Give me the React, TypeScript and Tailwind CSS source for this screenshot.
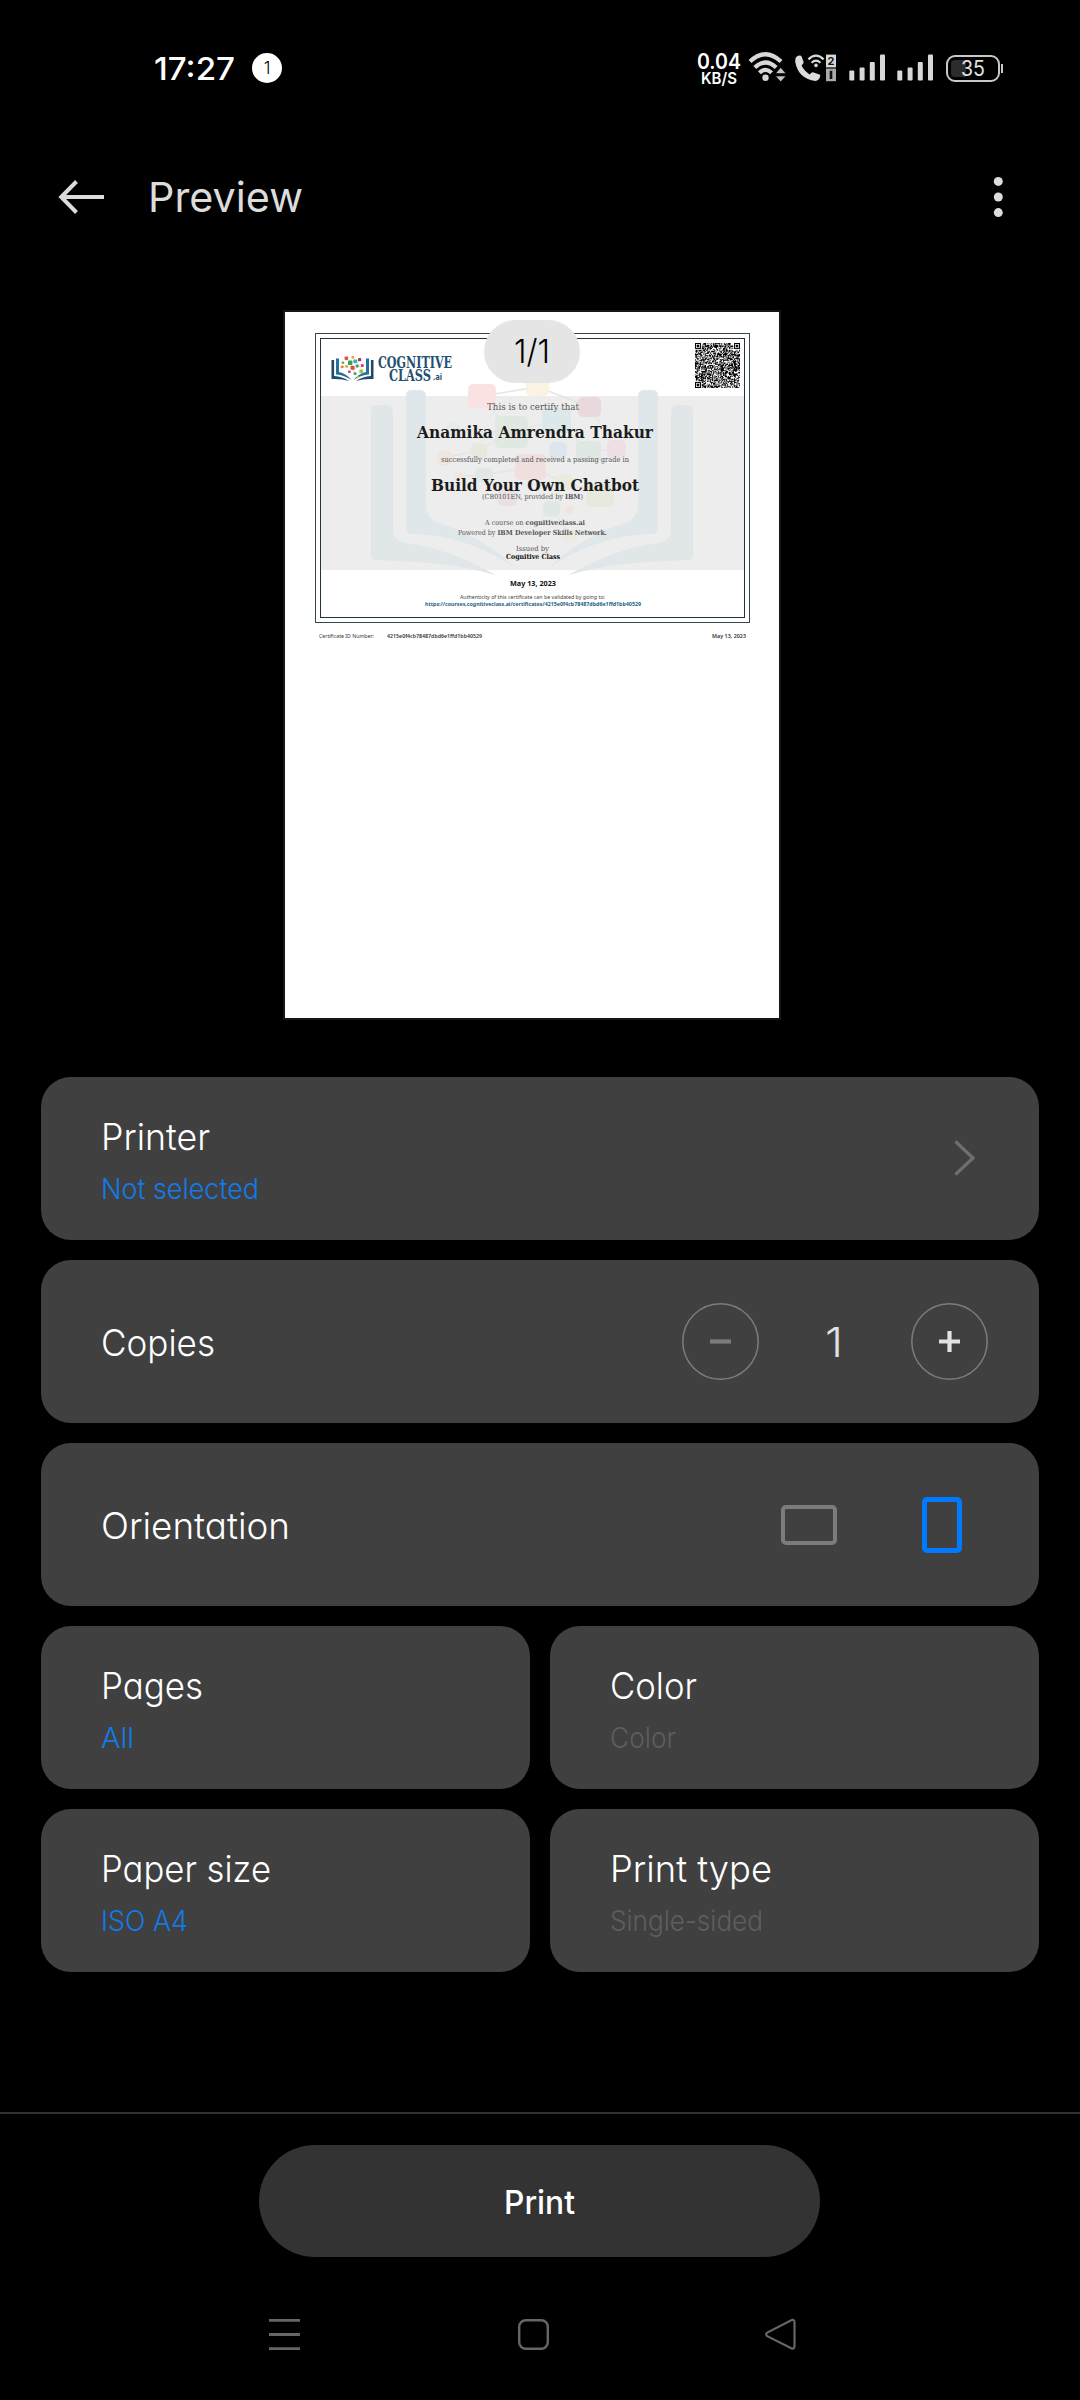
import { useLayoutEffect, useRef, useState, type ReactNode } from "react";

/** A single line of text, stretched or squeezed to the width of its box. */
function Fit({ className = "", children }: { className?: string; children: ReactNode }) {
  const box = useRef<HTMLDivElement>(null);
  const line = useRef<HTMLSpanElement>(null);
  const [scale, setScale] = useState(1);
  useLayoutEffect(() => {
    if (box.current && line.current && line.current.offsetWidth > 0) {
      const natural = line.current.getBoundingClientRect().width / scale;
      setScale(box.current.getBoundingClientRect().width / natural);
    }
  }, []);
  return (
    <div ref={box} className={"shrink-0 whitespace-nowrap " + className}>
      <span ref={line} className="inline-block origin-left" style={{ transform: `scaleX(${scale})` }}>
        {children}
      </span>
    </div>
  );
}

function Signal() {
  return (
    <svg width="37" height="27" viewBox="0 0 37 27" fill="#d8d8d8">
      <rect x="0.3" y="16.5" width="5" height="10" rx="1" />
      <rect x="10.6" y="13.5" width="5" height="13" rx="1" />
      <rect x="20.8" y="8" width="5" height="18.5" rx="1" />
      <rect x="31" y="0.5" width="5" height="26" rx="1" />
    </svg>
  );
}

function StatusBar() {
  return (
    <div className="flex h-[136px] items-start pl-[154px] pt-[50px] text-white">
      <Fit className="mt-[1px] w-[81px] text-[31px] font-medium leading-[36px]">17:27</Fit>
      <div className="ml-[17px] mt-[3px] flex h-[30px] w-[30px] items-center justify-center rounded-full bg-white text-[17px] font-light leading-none text-black">
        1
      </div>
      <div className="ml-[415px] w-[44px]">
        <Fit className="mt-[1px] w-[44px] text-[21px] font-semibold leading-[21px]">0.04</Fit>
        <Fit className="ml-[4px] mt-[-2px] w-[36px] text-[16px] font-semibold leading-[16px]">KB/S</Fit>
      </div>
      <svg className="ml-[7px] mt-[1px]" width="40" height="34" viewBox="0 0 40 34">
        <g fill="none" stroke="#d8d8d8" strokeWidth="4.2">
          <path d="M2 10.5 Q17.5 -4 33 10.5" />
          <path d="M6.8 16.5 Q17.5 6.5 28.2 16.5" />
          <path d="M11.4 21.8 Q17.5 16 23.6 21.8" />
        </g>
        <circle cx="17.5" cy="26.8" r="3.2" fill="#d8d8d8" />
        <path d="M27.5 22.5 L32.7 16.5 L38 22.5Z M27.5 25 L32.7 30.8 L38 25Z" fill="#c4c4c4" stroke="#000" strokeWidth="0.6" />
      </svg>
      <svg className="ml-[7px] mt-[4px]" width="42" height="32" viewBox="0 0 42 32">
        <path
          d="M0.4 5 Q1 2 5 1.6 Q6 1.6 6.6 2.6 L8.6 8 Q8.8 9 8 9.8 L6.6 11.6 Q9 17 14.6 20.4 L16.8 18.6 Q17.6 18 18.6 18.4 L24.4 20.6 Q25.6 21 25.2 22.2 Q24 26.6 20.4 27 Q3.6 25 0.2 8 Z"
          fill="#dcdcdc"
        />
        <g fill="none" stroke="#d8d8d8" strokeWidth="2.2">
          <path d="M13.4 5.4 Q21 -2 28.6 5.4" />
          <path d="M16.6 8.8 Q21 4.6 25.4 8.8" />
        </g>
        <circle cx="21" cy="11.4" r="1.8" fill="#d8d8d8" />
        <rect x="31" y="0.6" width="10" height="12.8" fill="#d8d8d8" />
        <rect x="31" y="14.6" width="10" height="12.6" fill="#a9a9a9" />
        <text x="36" y="11" textAnchor="middle" fontSize="11" fontWeight="700" fill="#111">2</text>
        <rect x="34.7" y="16.8" width="2.6" height="8.2" fill="#111" />
      </svg>
      <div className="ml-[12px] mt-[4px]">
        <Signal />
      </div>
      <div className="ml-[11px] mt-[4px]">
        <Signal />
      </div>
      <div className="ml-[12px] mt-[5px] flex items-center">
        <div className="relative flex h-[27px] w-[54px] items-center justify-center overflow-hidden rounded-[9px] border-2 border-[#c8c8c8]">
          <div className="absolute left-[3px] top-[3px] h-[17px] w-[15px] rounded-l-[4px] bg-[#2c2c2c]" />
          <Fit className="relative w-[24px] text-[21px] leading-[24px] text-[#e0e0e0]">35</Fit>
        </div>
        <div className="ml-[1px] h-[9px] w-[2px] bg-[#c8c8c8]" />
      </div>
    </div>
  );
}

function Header() {
  return (
    <div className="flex h-[121px] items-center pl-[58px] pr-[72px]">
      <svg width="48" height="40" viewBox="0 0 48 40" fill="none" stroke="#dcdcdc" strokeWidth="4">
        <path d="M3.5 20 H46 M18.5 4.5 L3.2 20 L18.5 35.5" />
      </svg>
      <Fit className="ml-[42px] mt-[1px] w-[155px] text-[41px] leading-[50px] text-[#dcdcdc]">Preview</Fit>
      <svg className="ml-auto" width="20" height="44" viewBox="0 0 20 44" fill="#dcdcdc">
        <circle cx="10.3" cy="6.4" r="4.5" />
        <circle cx="10.3" cy="22" r="4.5" />
        <circle cx="10.3" cy="37.6" r="4.5" />
      </svg>
    </div>
  );
}

const QR_SIZE = 53;

function inFinder(x: number, y: number, fx: number, fy: number) {
  return x >= fx - 1 && x <= fx + 7 && y >= fy - 1 && y <= fy + 7;
}

function QrCode() {
  const corners = [
    [0, 0],
    [QR_SIZE - 7, 0],
    [0, QR_SIZE - 7],
  ];
  let seed = 9241;
  let d = "";
  for (let y = 0; y < QR_SIZE; y++) {
    for (let x = 0; x < QR_SIZE; x++) {
      seed = (seed * 1103515245 + 12345) % 2147483648;
      if (corners.some(([fx, fy]) => inFinder(x, y, fx, fy))) continue;
      if ((seed >> 12) % 100 < 54) d += `M${x} ${y}h1v1h-1z`;
    }
  }
  return (
    <svg width="45" height="45" viewBox="0 0 53 53" fill="#000">
      <path d={d} />
      {corners.map(([x, y]) => (
        <g key={`${x}-${y}`}>
          <rect x={x + 0.6} y={y + 0.6} width="5.8" height="5.8" fill="none" stroke="#000" strokeWidth="1.2" />
          <rect x={x + 2} y={y + 2} width="3" height="3" />
        </g>
      ))}
    </svg>
  );
}

function LogoMark() {
  return (
    <svg width="46" height="30" viewBox="330 354 46 30">
      <g fill="#1d4a6e">
        <path d="M331.5 360 h2.6 V376 q8 .6 15 5 q-8 -2.6 -17.6 -2 z" />
        <path d="M373.5 360 h-2.6 V376 q-8 .6 -15 5 q8 -2.6 17.6 -2 z" />
      </g>
      <g fill="#2a6f97">
        <path d="M336 358.5 h3 V372 q7 1.4 12.6 8 q-7 -5 -15.6 -5.6 z" />
        <path d="M369 358.5 h-3 V372 q-7 1.4 -12.6 8 q7 -5 15.6 -5.6 z" />
      </g>
      <path
        d="M345 359 L350 363 L356 361 L360 366 L353 370 L347 366 L343 367 M350 363 L353 370 L357 375 M360 366 L362 371"
        stroke="#c9c9c9"
        strokeWidth="0.5"
        fill="none"
      />
      <rect x="344.6" y="356.4" width="3.6" height="3.6" rx="0.8" fill="#d9534a" />
      <rect x="351.4" y="356" width="2.8" height="2.8" rx="0.8" fill="#e8a33d" />
      <rect x="358" y="358" width="3.2" height="3.2" rx="0.8" fill="#b23a48" />
      <rect x="353.4" y="359.4" width="3.8" height="3.8" rx="0.8" fill="#3bb3c3" />
      <rect x="348" y="360.6" width="4.4" height="4.4" rx="0.8" fill="#3ba14a" />
      <rect x="341.6" y="361.4" width="2.6" height="2.6" rx="0.8" fill="#58b368" />
      <rect x="340.8" y="365.4" width="2.8" height="2.8" rx="0.8" fill="#e8853d" />
      <rect x="345.2" y="365" width="2.8" height="2.8" rx="0.8" fill="#c6b83c" />
      <rect x="350.6" y="365.8" width="4" height="4" rx="0.8" fill="#dd4b3e" />
      <rect x="355.6" y="364.4" width="3" height="3" rx="0.8" fill="#3fa36b" />
      <rect x="360.8" y="364" width="3" height="3" rx="0.8" fill="#d93b86" />
      <rect x="348" y="370.4" width="2.6" height="2.6" rx="0.8" fill="#c9348b" />
      <rect x="359.4" y="369.4" width="3.8" height="3.8" rx="0.8" fill="#9fc54d" />
      <rect x="353.6" y="372.2" width="2.8" height="2.8" rx="0.8" fill="#3fa36b" />
      <rect x="356.6" y="376" width="2.2" height="2.2" rx="0.6" fill="#d9c23c" />
    </svg>
  );
}

function CognitiveLogo() {
  return (
    <div className="flex text-[#24506f]">
      <LogoMark />
      <div className="ml-[2px] mt-[2px] font-['DejaVu_Serif',serif] font-bold">
        <Fit className="w-[74px] text-[16px] leading-[13px]">COGNITIVE</Fit>
        <div className="ml-[11px] flex items-start">
          <Fit className="w-[42px] text-[16px] leading-[13px]">CLASS</Fit>
          <Fit className="ml-[2px] mt-[2px] w-[9px] font-['Noto_Sans',sans-serif] text-[9.5px] leading-[12px]">.ai</Fit>
        </div>
      </div>
    </div>
  );
}

const NODES: [number, number, number, number, string][] = [
  [468, 384, 28, 24, "#fae2e2"],
  [526, 378, 23, 18, "#fbf3e2"],
  [578, 397, 23, 20, "#ead9dc"],
  [542, 408, 29, 25, "#dce8ea"],
  [495, 416, 33, 32, "#dfe8e1"],
  [446, 423, 14, 16, "#e5ebe8"],
  [549, 442, 18, 16, "#dfe5ec"],
  [576, 441, 25, 21, "#dfe8e2"],
  [607, 440, 19, 18, "#eedfe6"],
  [437, 451, 15, 15, "#f1e6df"],
  [471, 443, 16, 15, "#e9e8df"],
  [515, 454, 31, 26, "#efdfdf"],
  [454, 472, 10, 9, "#f0e5df"],
  [475, 468, 18, 14, "#e1e8e4"],
  [556, 474, 16, 16, "#eaeadd"],
  [586, 484, 28, 23, "#e7e9de"],
  [498, 490, 19, 16, "#ebdfe6"],
  [543, 501, 17, 16, "#e0e8e3"],
  [565, 506, 9, 8, "#f0e6df"],
  [562, 530, 15, 11, "#edebdf"],
];

function BookHalf() {
  return (
    <>
      <path
        d="M371 410 q0 -5 6 -5 h9 q7 0 7 6 V530 q0 10 12 13 q40 4 91 32 q-40 -11 -80 -13 L377 560 q-6 0 -6 -5 z"
        fill="#e1e6e9"
      />
      <path
        d="M406 395 q0 -5 6 -5 h8 q6 0 6 6 V505 q0 14 13 18 q44 14 78 46 q-50 -34 -104 -35 q-7 0 -7 -5 z"
        fill="#e0e7eb"
      />
    </>
  );
}

function Watermark() {
  return (
    <svg className="absolute left-0 top-0" width="435" height="290" viewBox="315 333 435 290">
      <rect x="320" y="396" width="425" height="174" fill="#ededed" />
      <BookHalf />
      <g transform="translate(1064 0) scale(-1 1)">
        <BookHalf />
      </g>
      <path
        d="M482 396 L538 387 L590 407 M482 396 L511 432 L557 420 L588 451 M453 431 L511 432 L479 450 L445 458 M530 467 L558 450 M484 475 L530 467 L564 482 L600 495 M459 476 L484 475 L508 498 M564 482 L552 509 L570 535 M590 407 L616 449 L588 451"
        fill="none"
        stroke="#e5e5e5"
        strokeWidth="1.4"
      />
      {NODES.map(([x, y, w, h, c]) => (
        <rect key={`${x}-${y}`} x={x} y={y} width={w} height={h} rx="5" fill={c} />
      ))}
    </svg>
  );
}

function Certificate() {
  return (
    <div className="relative ml-[30px] mt-[21px] h-[290px] w-[435px] border border-[#34464e] p-1">
      <div className="absolute inset-[-1px]">
        <Watermark />
      </div>
      <div className="relative h-full border border-[#23343c]">
        <div className="flex h-[58px] items-start justify-between pl-[9px] pr-[4px] pt-[4px]">
          <div className="mt-[11px]">
            <CognitiveLogo />
          </div>
          <QrCode />
        </div>
        <div className="flex h-[173px] flex-col items-center font-['DejaVu_Serif_Condensed','DejaVu_Serif',serif] text-[7px] leading-[8px] text-[#555]">
          <Fit className="mt-[4px] w-[92px] text-[9.5px] leading-[12px]">This is to certify that</Fit>
          <Fit className="ml-[5px] mt-[10px] w-[236px] text-[16px] font-bold leading-[20px] text-[#1c1c1c]">
            Anamika Amrendra Thakur
          </Fit>
          <Fit className="ml-[5px] mt-[12px] w-[188px] text-[7.5px] leading-[10px]">
            successfully completed and received a passing grade in
          </Fit>
          <Fit className="ml-[5px] mt-[11px] w-[208px] text-[16px] font-bold leading-[20px] text-[#1c1c1c]">
            Build Your Own Chatbot
          </Fit>
          <Fit className="mt-[-3px] w-[101px]">
            (CB0101EN, provided by <b>IBM</b>)
          </Fit>
          <Fit className="ml-[5px] mt-[18px] w-[100px]">
            A course on <b>cognitiveclass.ai</b>
          </Fit>
          <Fit className="mt-[2px] w-[149px]">
            Powered by <b>IBM Developer Skills Network.</b>
          </Fit>
          <Fit className="mt-[8px] w-[33px]">Issued by</Fit>
          <Fit className="w-[54px] font-bold text-[#111]">Cognitive Class</Fit>
        </div>
        <div className="flex flex-col items-center font-['Noto_Sans',sans-serif] text-[5.4px] leading-[7px] text-[#444]">
          <Fit className="mt-[9px] w-[46px] text-[7px] font-bold leading-[10px] text-[#111]">May 13, 2023</Fit>
          <Fit className="mt-[5px] w-[145px]">Authenticity of this certificate can be validated by going to:</Fit>
          <Fit className="w-[216px] font-bold text-[#1d5f88]">
            https://courses.cognitiveclass.ai/certificates/4215e0f4cb78487dbd6e1ffd1bb40529
          </Fit>
        </div>
      </div>
    </div>
  );
}

function PreviewPage() {
  return (
    <div className="relative ml-[285px] mt-[55px] h-[706px] w-[494px] bg-white outline-2 outline-[#161616]">
      <div className="flex flex-col">
        <Certificate />
        <div className="ml-[34px] mt-[9px] flex w-[427px] items-center font-['Noto_Sans',sans-serif] text-[5.4px] leading-[8px] text-[#333]">
          <Fit className="w-[55px]">Certificate ID Number:</Fit>
          <Fit className="ml-[13px] w-[95px] font-semibold">4215e0f4cb78487dbd6e1ffd1bb40529</Fit>
          <Fit className="ml-auto w-[34px] font-semibold">May 13, 2023</Fit>
        </div>
      </div>
      <div className="absolute left-[199px] top-[8px] flex h-[63px] w-[96px] justify-center rounded-full bg-[#e5e5e5] pt-[11px]">
        <Fit className="w-[36px] text-[33px] font-light leading-[40px] text-black">1/1</Fit>
      </div>
    </div>
  );
}

function SettingText({
  title,
  value,
  titleWidth,
  valueWidth,
  muted = false,
}: {
  title: string;
  value: string;
  titleWidth: string;
  valueWidth: string;
  muted?: boolean;
}) {
  return (
    <div className="pt-[38px]">
      <Fit className={"text-[37px] font-light leading-[44px] text-white " + titleWidth}>{title}</Fit>
      <Fit
        className={
          "mt-[13px] text-[28px] font-light leading-[35px] " +
          (muted ? "text-[#5e5e5e] " : "text-[#127ae9] ") +
          valueWidth
        }
      >
        {value}
      </Fit>
    </div>
  );
}

const CARD = "flex h-[163px] rounded-[30px] bg-[#404040] pl-[60px]";

function Settings() {
  return (
    <div className="mx-[41px] mt-[59px] grid grid-cols-2 gap-5">
      <div className={"col-span-2 justify-between pr-[62px] " + CARD}>
        <SettingText title="Printer" value="Not selected" titleWidth="w-[109px]" valueWidth="w-[158px]" />
        <svg className="mt-[61px]" width="24" height="40" viewBox="0 0 24 40" fill="none" stroke="#6f6f6f" strokeWidth="3.2">
          <path d="M2.5 3.5 L20 20 L2.5 36.5" />
        </svg>
      </div>

      <div className={"col-span-2 pr-[51px] " + CARD}>
        <Fit className="mt-[61px] w-[114px] text-[37px] font-light leading-[44px] text-white">Copies</Fit>
        <div className="ml-auto mt-[43px] flex h-[77px] items-center">
          <svg width="77" height="77" viewBox="0 0 77 77" fill="none" stroke="#7c7c7c">
            <circle cx="38.5" cy="38.5" r="37.7" strokeWidth="1.5" />
            <path d="M28 38.5 H49" strokeWidth="4.2" />
          </svg>
          <Fit className="ml-[66px] mt-[1px] w-[18px] text-[41px] font-light leading-[50px] text-[#e2e2e2]">1</Fit>
          <svg className="ml-[68px]" width="77" height="77" viewBox="0 0 77 77" fill="none">
            <circle cx="38.5" cy="38.5" r="37.7" stroke="#7c7c7c" strokeWidth="1.5" />
            <path d="M28 38.5 H49 M38.5 28 V49" stroke="#e2e2e2" strokeWidth="4.2" />
          </svg>
        </div>
      </div>

      <div className={"col-span-2 pr-[77px] " + CARD}>
        <Fit className="mt-[61px] w-[189px] text-[37px] font-light leading-[44px] text-white">Orientation</Fit>
        <div className="ml-auto flex items-center">
          <div className="h-[40px] w-[56px] rounded-[5px] border-4 border-[#7c7c7c]" />
          <div className="ml-[85px] h-[56px] w-[40px] rounded-[5px] border-[5px] border-[#007bff]" />
        </div>
      </div>

      <div className={CARD}>
        <SettingText title="Pages" value="All" titleWidth="w-[102px]" valueWidth="w-[33px]" />
      </div>
      <div className={CARD}>
        <SettingText title="Color" value="Color" titleWidth="w-[87px]" valueWidth="w-[66px]" muted />
      </div>
      <div className={CARD}>
        <SettingText title="Paper size" value="ISO A4" titleWidth="w-[170px]" valueWidth="w-[87px]" />
      </div>
      <div className={CARD}>
        <SettingText title="Print type" value="Single-sided" titleWidth="w-[162px]" valueWidth="w-[153px]" muted />
      </div>
    </div>
  );
}

function NavBar() {
  return (
    <div className="mt-[58px] flex items-center pl-[268px]">
      <svg width="33" height="38" viewBox="0 0 33 38" stroke="#666" strokeWidth="2.8">
        <path d="M1 5.3 H32 M1 19.5 H32 M1 33.7 H32" />
      </svg>
      <svg className="ml-[216px]" width="33" height="38" viewBox="0 0 33 38" fill="none" stroke="#666" strokeWidth="2.4">
        <rect x="2.2" y="5.2" width="28.6" height="28.6" rx="6.5" />
      </svg>
      <svg className="ml-[214px]" width="33" height="38" viewBox="0 0 33 38" fill="none" stroke="#666" strokeWidth="2.2">
        <path d="M27.3 5.3 Q30.5 3.8 30.5 7.5 V31 Q30.5 34.8 27.3 33.2 L3.2 21.2 Q1 19.3 3.2 17.6 Z" />
      </svg>
    </div>
  );
}

export default function App() {
  return (
    <div className="h-[2400px] w-[1080px] overflow-hidden bg-black font-['Inter',sans-serif] [font-feature-settings:'cv11']">
      <StatusBar />
      <Header />
      <PreviewPage />
      <Settings />
      <div className="mt-[140px] h-[2px] bg-[#333]" />
      <div className="ml-[259px] mt-[31px] flex h-[112px] w-[561px] justify-center rounded-full bg-[#333] pt-[37px]">
        <Fit className="w-[71px] text-[33px] font-medium leading-[40px] text-white">Print</Fit>
      </div>
      <NavBar />
    </div>
  );
}
